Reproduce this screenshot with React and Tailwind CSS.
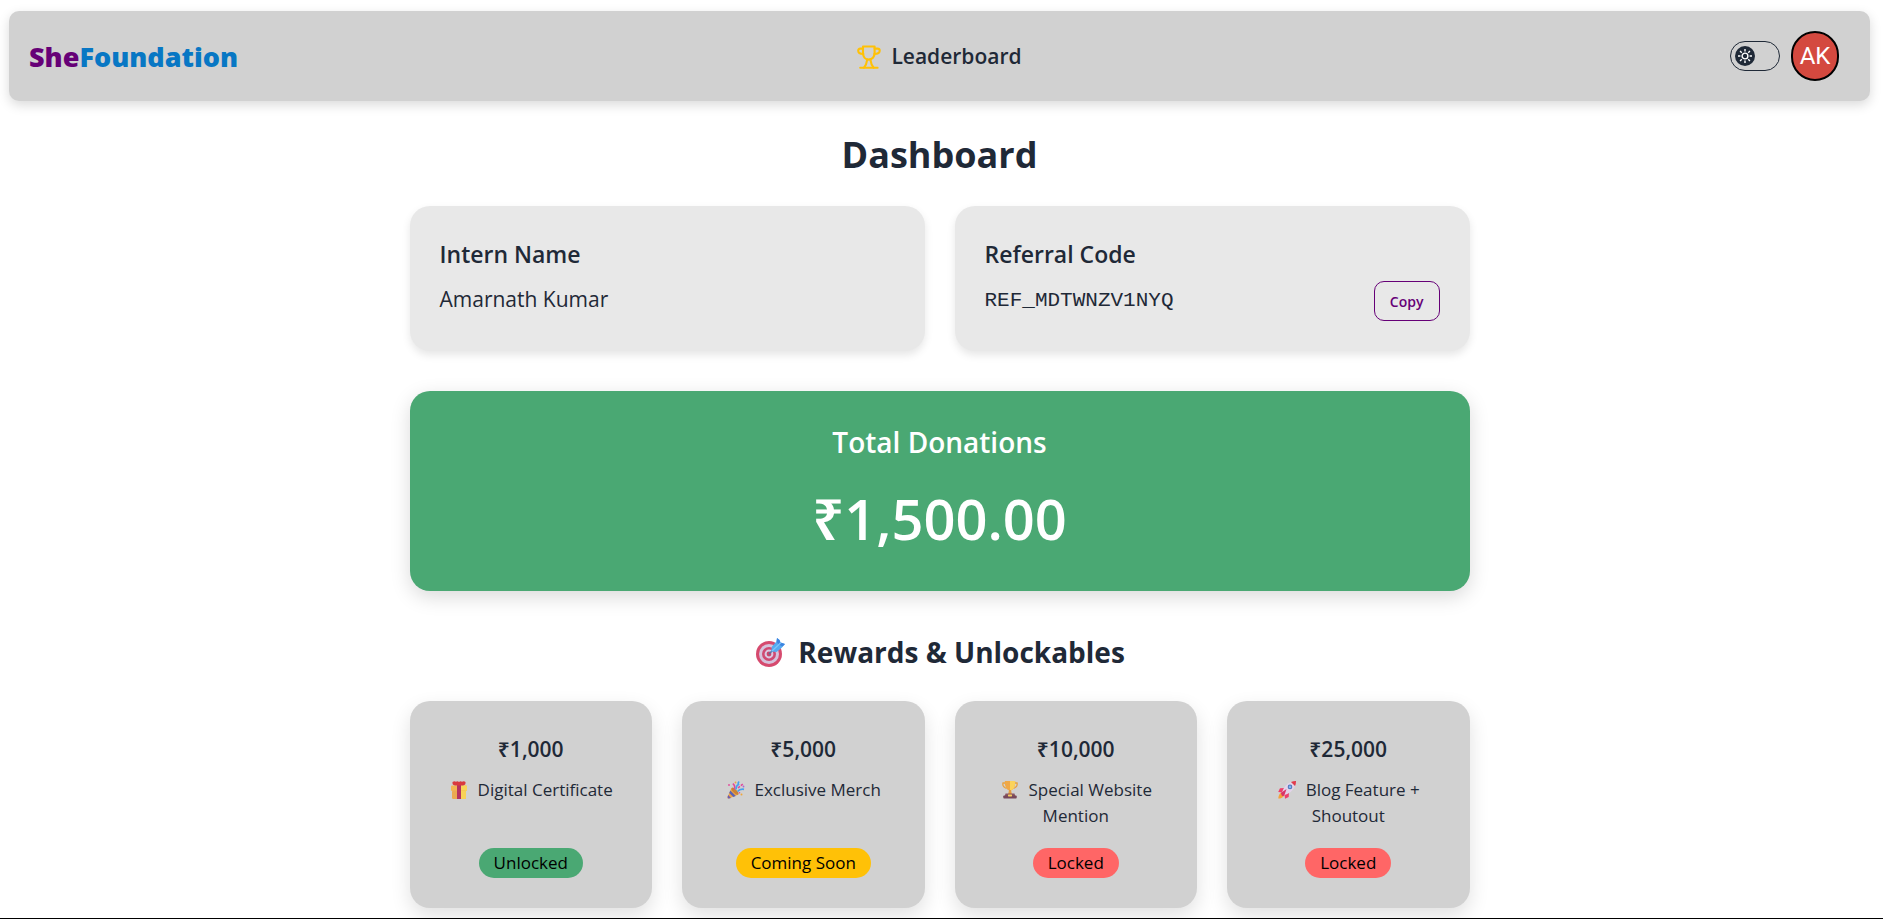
import React from "react";

function TrophyIcon() {
  return (
    <svg viewBox="0 0 24 24" className="size-6 text-[#ffc107]" fill="none" stroke="currentColor" strokeWidth="2.1" strokeLinecap="round" strokeLinejoin="round" aria-hidden="true">
      <path d="M6 1.500 H17.600 V8 C17.600 12 15.200 14.600 11.800 14.600 C8.400 14.600 6 12 6 8 Z" />
      <path d="M6 3.600 H3.200 Q1.200 3.600 1.200 5.800 Q1.200 8.900 6.300 9" />
      <path d="M17.600 3.600 H20.600 Q22.700 3.600 22.700 5.800 Q22.700 8.900 17.300 9" />
      <path d="M10.200 14.600 Q9.600 19.500 7 22.700 M13.400 14.600 Q14 19.500 16.600 22.700" />
      <path d="M3.200 22.800 H20.600" />
    </svg>
  );
}

function SunIcon() {
  return (
    <svg viewBox="0 0 20 20" className="size-5" fill="none" stroke="currentColor" strokeWidth="1.4" aria-hidden="true">
      <circle cx="10" cy="10" r="2.900" />
      <path d="M10 3 V5.400 M10 14.600 V17 M3 10 H5.400 M14.600 10 H17 M5.050 5.050 L6.750 6.750 M13.250 13.250 L14.950 14.950 M5.050 14.950 L6.750 13.250 M13.250 6.750 L14.950 5.050" />
    </svg>
  );
}

function TargetIcon() {
  return (
    <svg viewBox="0 0 32 32" className="size-8 shrink-0" aria-hidden="true">
      <circle cx="15" cy="18" r="13" fill="#d64a6e" />
      <circle cx="15" cy="18" r="10" fill="#d5c3dc" />
      <circle cx="15" cy="18" r="7" fill="#d04a72" />
      <circle cx="15" cy="18" r="4.4" fill="#d9c8e2" />
      <circle cx="15" cy="18" r="2.4" fill="#c9466c" />
      <path d="M15 18 L22 11" stroke="#5d6f9c" strokeWidth="1.6" />
      <path d="M17 15.5 L18 10.5 L22.5 5.5 L23 2 L25.5 4 L26.5 6.5 L31 8 L27.5 12 L22.5 16 Z" fill="#55aaf0" />
      <path d="M22.5 5.5 L23 2 L25.5 4 L26.5 6.5 L31 8 L28.5 10.5 L24.5 8.5 Z" fill="#3d84e0" />
      <path d="M18 15 L27 6.5" stroke="#7cc6fa" strokeWidth="1.2" />
    </svg>
  );
}

function GiftIcon() {
  return (
    <svg viewBox="0 0 20 20" className="inline-block size-5 align-[-4px]" aria-hidden="true">
      <rect x="2" y="5.500" width="16" height="5.500" rx="1" fill="#f3b552" />
      <rect x="10" y="5.500" width="8" height="5.500" rx="1" fill="#f9d65a" />
      <rect x="3" y="10.500" width="14" height="8.500" rx="1.200" fill="#eba950" />
      <rect x="10" y="10.500" width="7" height="8.500" rx="1" fill="#f8d257" />
      <rect x="8" y="5" width="4" height="14" fill="#b5325f" />
      <path d="M3.500 2 Q5.500 0.500 7 1.800 Q8.500 0.600 10 2 Q11.500 0.600 13 1.800 Q15 0.500 16.500 2 Q17 5 14 5.500 L6 5.500 Q3 5 3.500 2Z" fill="#d93a40" />
    </svg>
  );
}

function PartyIcon() {
  return (
    <svg viewBox="0 0 20 20" className="inline-block size-5 align-[-4px]" aria-hidden="true">
      <path d="M5.500 8 L12.500 14.500 L3 18.500 Q1.300 18.800 1.500 17 Z" fill="#efa544" />
      <path d="M4.300 10.500 L9.800 16 L7.300 17 L3.200 13Z" fill="#5b63b5" />
      <path d="M2.200 15 L5 18 L3 18.600 Q1.300 18.700 1.600 17Z" fill="#6a5bb0" />
      <ellipse cx="9" cy="11.200" rx="1.800" ry="4.600" transform="rotate(-45 9 11.200)" fill="#c98238" />
      <path d="M8.500 9.500 Q9.500 5.500 6.800 3.600" fill="none" stroke="#e2489a" strokeWidth="1.600" />
      <path d="M10 9.500 Q10 5.500 12.500 4.500 Q11.500 2.500 13.300 1.600" fill="none" stroke="#45a2ee" strokeWidth="1.600" />
      <path d="M11.500 11.500 Q14 8.500 18 9.300" fill="none" stroke="#45a2ee" strokeWidth="1.700" />
      <path d="M12 8 L17.500 3.500" stroke="#e2489a" strokeWidth="1.500" strokeDasharray="2.500 1.200" />
      <circle cx="3" cy="5" r="0.900" fill="#e2489a" />
      <circle cx="9.500" cy="2.500" r="0.900" fill="#f1a73b" />
      <circle cx="17.500" cy="6.500" r="0.900" fill="#a965d6" />
      <circle cx="15.500" cy="14.500" r="1" fill="#f1a73b" />
      <circle cx="13.500" cy="12.800" r="0.800" fill="#e2489a" />
    </svg>
  );
}

function CupIcon() {
  return (
    <svg viewBox="0 0 20 20" className="inline-block size-5 align-[-4px]" aria-hidden="true">
      <path d="M5 3 H3 Q2 6.800 6.500 8.500 M15 3 H17 Q18 6.800 13.500 8.500" fill="none" stroke="#e8a13e" strokeWidth="1.300" />
      <path d="M4.800 1 H15.200 Q15.500 9.500 10 10.800 Q4.500 9.500 4.800 1Z" fill="#f0a846" />
      <path d="M10 1 H15.200 Q15.500 9.500 10 10.800Z" fill="#fbd35b" />
      <path d="M9 10 H11 L11.800 14 H8.200Z" fill="#e79b3c" />
      <path d="M5.500 13.500 H14.500 L15.200 16 H4.800Z" fill="#8b5560" />
      <rect x="3.300" y="15.500" width="13.400" height="3" rx="0.800" fill="#77485a" />
      <rect x="8" y="14.500" width="4" height="2" rx="0.400" fill="#f6cd5e" />
    </svg>
  );
}

function RocketIcon() {
  return (
    <svg viewBox="0 0 20 20" className="inline-block size-5 align-[-4px]" aria-hidden="true">
      <path d="M4.500 12.500 Q1.500 14 1.300 18.600 Q5.500 18.600 7.300 15.500Z" fill="#f5a23b" />
      <path d="M8 8 L3 8.300 L1.200 12 L6 12.500Z" fill="#ee3f6b" />
      <path d="M12 12 L11.700 17 L8 18.800 L7.500 14Z" fill="#ee3f6b" />
      <path d="M5 12.500 Q7.500 4.500 14 2 L18 6 Q15.500 12.500 7.500 15Z" fill="#e3d3ea" />
      <path d="M14 2 Q16.500 0.900 19 1 Q19.100 3.500 18 6Z" fill="#e23a4c" />
      <path d="M3.800 13 L9.500 9 L7.200 15.800 L5 16Z" fill="#d93567" />
      <circle cx="13" cy="6.900" r="2.300" fill="#4b74b8" />
      <circle cx="13" cy="6.900" r="1.300" fill="#7fb6ee" />
    </svg>
  );
}

const rewards = [
  { amount: "₹1,000", label: "Digital Certificate", Icon: GiftIcon, status: "Unlocked", tone: "bg-[#4aa873]" },
  { amount: "₹5,000", label: "Exclusive Merch", Icon: PartyIcon, status: "Coming Soon", tone: "bg-[#ffc107]" },
  { amount: "₹10,000", label: "Special Website Mention", Icon: CupIcon, status: "Locked", tone: "bg-[#ff6666]" },
  { amount: "₹25,000", label: "Blog Feature + Shoutout", Icon: RocketIcon, status: "Locked", tone: "bg-[#ff6666]" },
];

function Navbar() {
  return (
    <header className="grid h-[90px] grid-cols-3 items-center rounded-[10px] bg-[#d1d1d1] px-5 shadow-[0_4px_12px_rgba(0,0,0,0.15)]">
      <a href="#home" className="justify-self-start pt-0.5 text-[27px] font-extrabold text-[#0877c4]">
        <span className="text-[#660077]">She</span>Foundation
      </a>
      <a href="#leaderboard" className="flex items-center gap-2.5 justify-self-center pt-0.5 text-[21px] font-semibold">
        <TrophyIcon />
        Leaderboard
      </a>
      <div className="mr-[11px] flex items-center gap-[11px] justify-self-end">
        <button type="button" aria-label="Toggle theme" className="flex h-[30px] w-[50px] items-center rounded-full border border-[#1f2937] px-1">
          <span className="size-5 rounded-full bg-[#1f2937] text-white">
            <SunIcon />
          </span>
        </button>
        <button type="button" aria-label="Account" className="flex h-[50px] w-12 items-center justify-center rounded-full border-2 border-black bg-[#d4493f] font-['Roboto',sans-serif] text-[24px] text-white">
          AK
        </button>
      </div>
    </header>
  );
}

export default function App() {
  return (
    <div className="min-h-screen border-b border-black bg-white pt-[11px] pr-[13px] pb-[10px] pl-[9px] font-['Open_Sans','Noto_Sans',sans-serif] text-[#1f2937]">
      <Navbar />
      <main className="mx-auto max-w-[1060px] pt-6">
        <h1 className="text-center text-[36px] leading-[60px] font-bold">Dashboard</h1>

        <section className="mt-[21px] grid grid-cols-2 gap-[30px]">
          <div className="rounded-[20px] bg-[#e8e8e8] p-[30px] shadow-[0_4px_8px_rgba(0,0,0,0.1)]">
            <h2 className="text-[23px] leading-9 font-semibold">Intern Name</h2>
            <p className="mt-[9px] text-[21px] leading-9">Amarnath Kumar</p>
          </div>
          <div className="rounded-[20px] bg-[#e8e8e8] p-[30px] shadow-[0_4px_8px_rgba(0,0,0,0.1)]">
            <h2 className="text-[23px] leading-9 font-semibold">Referral Code</h2>
            <div className="mt-[9px] flex items-center justify-between">
              <code className="font-['Liberation_Mono',monospace] text-[21px]">REF_MDTWNZV1NYQ</code>
              <button type="button" className="h-10 rounded-[10px] border border-[#660077] px-[15px] text-[14px] font-semibold text-[#660077]">Copy</button>
            </div>
          </div>
        </section>

        <section className="mt-10 rounded-[20px] bg-[#4aa873] p-[30px] text-center text-white shadow-[0_6px_20px_rgba(0,0,0,0.15)]">
          <h2 className="text-[28px] leading-[42px] font-semibold">Total Donations</h2>
          <p className="mt-3 text-[56px] leading-[86px] font-semibold">₹1,500.00</p>
        </section>

        <section className="mt-10">
          <h2 className="flex items-center justify-center gap-3 text-[28px] leading-[42px] font-bold">
            <TargetIcon />
            Rewards &amp; Unlockables
          </h2>
          <ul className="mt-7 grid grid-cols-4 gap-[30px]">
            {rewards.map(({ amount, label, Icon, status, tone }) => (
              <li key={amount} className="flex flex-col items-center rounded-[20px] bg-[#d1d1d1] p-[30px] text-center shadow-[0_8px_20px_rgba(0,0,0,0.12)]">
                <h3 className="text-[21px] leading-9 font-semibold">{amount}</h3>
                <p className="mt-2.5 mb-[19px] min-h-[52px] text-[17px] leading-[26px]">
                  <Icon /> &nbsp;{label}
                </p>
                <span className={`h-[30px] rounded-full px-[15px] text-[17px] leading-[30px] text-black ${tone}`}>{status}</span>
              </li>
            ))}
          </ul>
        </section>
      </main>
    </div>
  );
}
